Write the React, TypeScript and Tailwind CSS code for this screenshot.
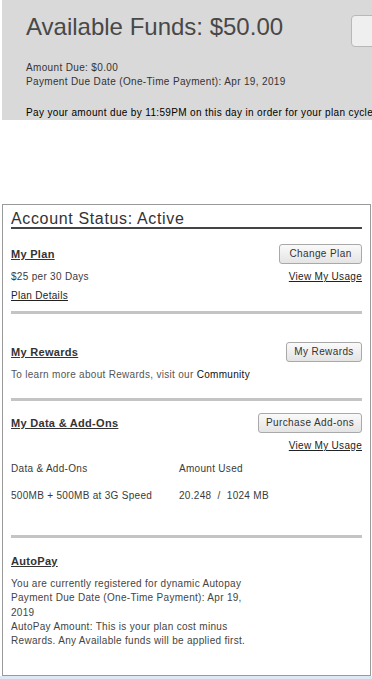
import React from 'react';

const font = { fontFamily: '"Liberation Sans", Arial, sans-serif' };

const Btn = ({ label, w }: { label: string; w: string }) => (
  <button
    className={`${w} h-[20px] shrink-0 rounded-[3px] border border-[#a9a9a9] bg-gradient-to-b from-[#fafafa] to-[#e4e4e4] text-center text-[10px] leading-[18px] tracking-[0.4px] text-[#333]`}
  >
    {label}
  </button>
);

const Heading = ({ children }: { children: React.ReactNode }) => (
  <span className="text-[11px] font-bold leading-[14px] text-[#333] underline underline-offset-[1px]">
    {children}
  </span>
);

const Sep = ({ mt }: { mt: string }) => <div className={`${mt} h-[3px] bg-[#c4c4c4]`} />;

export default function App() {
  return (
    <div className="w-[372px] h-[679px] overflow-hidden bg-white" style={font}>
      {/* Funds summary */}
      <div className="ml-[2px] w-[460px] h-[120px] bg-[#d9d9d9] pl-[24px] pr-[21px] pt-[13px]">
        <div className="flex items-start">
          <h1 className="text-[24px] leading-[28px] text-[#484848] font-normal">Available Funds: $50.00</h1>
          <div className="ml-auto mt-[2px] w-[90px] h-[32px] rounded-[4px] border border-[#b8b8b8] bg-[#efefef]" />
        </div>
        <div className="mt-[14px] text-[10px] leading-[14px] tracking-[0.35px] text-[#333]">
          <div>Amount Due: $0.00</div>
          <div>Payment Due Date (One-Time Payment): Apr 19, 2019</div>
        </div>
        <div className="mt-[17px] whitespace-nowrap text-[10px] leading-[14px] tracking-[0.35px] text-black">
          Pay your amount due by 11:59PM on this day in order for your plan cycle to renew.
        </div>
      </div>

      {/* Account status card */}
      <div className="mt-[84px] ml-[2px] w-[369px] h-[472px] border border-[#9a9a9a] px-[8px] pt-[6px] text-[10px] leading-[14px] tracking-[0.3px] text-[#3a3a3a]">
        <h2 className="border-b-2 border-[#444] text-[16px] leading-[16px] tracking-[0.65px] text-[#333] font-normal">
          Account Status: Active
        </h2>

        <div className="mt-[15px] flex items-center">
          <Heading>My Plan</Heading>
          <div className="ml-auto">
            <Btn label="Change Plan" w="w-[83px]" />
          </div>
        </div>
        <div className="mt-[6px] flex">
          <span>$25 per 30 Days</span>
          <span className="ml-auto text-[#222] underline">View My Usage</span>
        </div>
        <div className="mt-[5px] text-[#222] underline">Plan Details</div>
        <Sep mt="mt-[8px]" />

        <div className="mt-[28px] flex items-center">
          <Heading>My Rewards</Heading>
          <div className="ml-auto">
            <Btn label="My Rewards" w="w-[76px]" />
          </div>
        </div>
        <div className="mt-[6px] text-[#555]">
          To learn more about Rewards, visit our <span className="text-[#111]">Community</span>
        </div>
        <Sep mt="mt-[16px]" />

        <div className="mt-[12px] flex items-center">
          <Heading>My Data &amp; Add-Ons</Heading>
          <div className="ml-auto">
            <Btn label="Purchase Add-ons" w="w-[104px]" />
          </div>
        </div>
        <div className="mt-[6px] flex justify-end">
          <span className="text-[#222] underline">View My Usage</span>
        </div>
        <div className="mt-[9px] grid grid-cols-[168px_1fr] gap-y-[13px]">
          <span>Data &amp; Add-Ons</span>
          <span>Amount Used</span>
          <span>500MB + 500MB at 3G Speed</span>
          <span>20.248&nbsp; /&nbsp; 1024 MB</span>
        </div>
        <Sep mt="mt-[32px]" />

        <div className="mt-[16px]">
          <Heading>AutoPay</Heading>
        </div>
        <p className="mt-[8px] w-[250px] leading-[14.25px] text-[#444]">
          You are currently registered for dynamic Autopay
          <br />
          Payment Due Date (One-Time Payment): Apr 19, 2019
          <br />
          AutoPay Amount: This is your plan cost minus Rewards. Any Available funds will be applied first.
        </p>
      </div>
      <div className="h-[3px] bg-[#dde8f4]" />
    </div>
  );
}
